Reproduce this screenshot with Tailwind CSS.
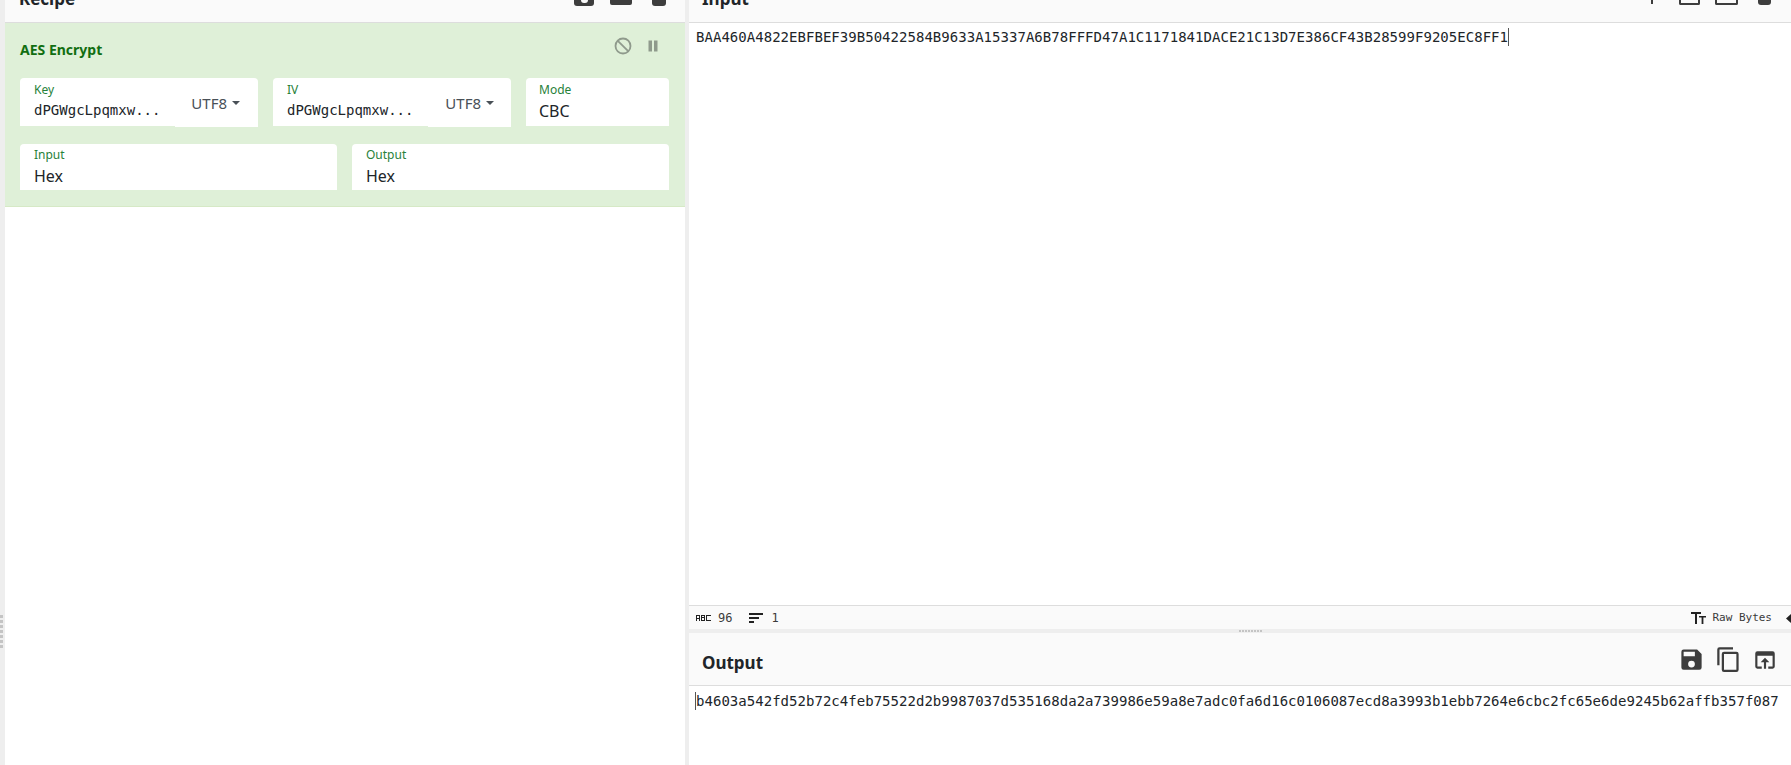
<!DOCTYPE html>
<html lang="en">
<head>
    <meta charset="UTF-8">
    <meta name="viewport" content="width=device-width, initial-scale=1.0">
    <title>CyberChef</title>
    <script src="https://cdn.jsdelivr.net/npm/@tailwindcss/browser@4"></script>
</head>
<body class="bg-[#eeeeee] h-[765px] w-[1791px] overflow-hidden flex font-['Noto_Sans','Open_Sans',sans-serif] text-[#212529]">

    <!-- left gutter -->
    <div class="w-[5px] shrink-0 relative">
        <div class="absolute left-0 top-[615px] flex flex-col gap-[2px]">
            <div class="w-[3px] h-[3px] bg-[#c4c4c4]"></div>
            <div class="w-[3px] h-[3px] bg-[#c4c4c4]"></div>
            <div class="w-[3px] h-[3px] bg-[#c4c4c4]"></div>
            <div class="w-[3px] h-[3px] bg-[#c4c4c4]"></div>
            <div class="w-[3px] h-[3px] bg-[#c4c4c4]"></div>
            <div class="w-[3px] h-[3px] bg-[#c4c4c4]"></div>
            <div class="w-[3px] h-[3px] bg-[#c4c4c4]"></div>
        </div>
    </div>

    <!-- recipe -->
    <div class="w-[680px] shrink-0 bg-white flex flex-col">
        <div class="h-[23px] shrink-0 bg-[#fafafa] border-b border-[#dddddd] flex items-start justify-between overflow-hidden pl-[14px] pr-[19px]">
            <span class="text-[17px] leading-[24px] font-bold mt-[-13px]">Recipe</span>
            <div class="flex items-start gap-[16px]">
                <div class="w-[20px] h-[6px] rounded-b-[3px] bg-[#3d3d3d] flex justify-center"><div class="w-[7px] h-[3px] rounded-b-full bg-[#fafafa]"></div></div>
                <div class="w-[22px] h-[5px] rounded-b-[2px] bg-[#3d3d3d]"></div>
                <div class="w-[14px] h-[6px] ml-[4px] rounded-b-[3px] bg-[#3d3d3d]"></div>
            </div>
        </div>
        <div class="h-[184px] shrink-0 bg-[#dff0d8] border-b border-[#d6e9c6] pl-[15px] pr-[16px] flex flex-col">
            <div class="h-[55px] shrink-0 flex justify-between pt-[13px]">
                <span class="text-[14px] leading-[27px] font-bold text-[#116e11]">AES Encrypt</span>
                <div class="flex gap-[10px] pr-[6px]">
                    <svg class="w-[20px] h-[20px]" viewBox="0 0 20 20" fill="none" stroke="#8f9a8c" stroke-width="1.8"><circle cx="10" cy="10" r="7.500"/><path d="M4.800 4.800l10.400 10.400"/></svg>
                    <svg class="w-[20px] h-[20px]" viewBox="0 0 20 20" fill="#8f9a8c"><path d="M5.500 4.500h3.500v11H5.500zM11 4.500h3.500v11H11z"/></svg>
                </div>
            </div>
            <div class="flex gap-[15px]">
                <div class="w-[238px] h-[48px] bg-white rounded-t-[4px] flex relative">
                    <div class="pl-[14px] flex-1">
                        <div class="text-[12px] leading-[16px] pt-[4px] text-[#28813a]">Key</div>
                        <div class="text-[14px] leading-[20px] pt-[2px] font-['DejaVu_Sans_Mono',monospace]">dPGWgcLpqmxw...</div>
                    </div>
                    <div class="absolute right-[18px] top-[15px] text-[15px] leading-[20px] text-[#495057] flex items-center gap-[5px]">UTF8<span class="w-0 h-0 border-x-[4px] border-x-transparent border-t-[4px] border-t-[#495057]"></span></div>
                    <div class="absolute right-0 bottom-[-1px] w-[83px] h-px bg-white"></div>
                </div>
                <div class="w-[238px] h-[48px] bg-white rounded-t-[4px] flex relative">
                    <div class="pl-[14px] flex-1">
                        <div class="text-[12px] leading-[16px] pt-[4px] text-[#28813a]">IV</div>
                        <div class="text-[14px] leading-[20px] pt-[2px] font-['DejaVu_Sans_Mono',monospace]">dPGWgcLpqmxw...</div>
                    </div>
                    <div class="absolute right-[17px] top-[15px] text-[15px] leading-[20px] text-[#495057] flex items-center gap-[5px]">UTF8<span class="w-0 h-0 border-x-[4px] border-x-transparent border-t-[4px] border-t-[#495057]"></span></div>
                    <div class="absolute right-0 bottom-[-1px] w-[83px] h-px bg-white"></div>
                </div>
                <div class="flex-1 h-[48px] bg-white rounded-t-[4px] pl-[13px]">
                    <div class="text-[12px] leading-[16px] pt-[4px] text-[#28813a]">Mode</div>
                    <div class="text-[16px] leading-[22px] pt-[2px]">CBC</div>
                </div>
            </div>
            <div class="flex gap-[15px] mt-[18px]">
                <div class="flex-1 h-[46px] bg-white rounded-t-[4px] pl-[14px]">
                    <div class="text-[12px] leading-[16px] pt-[3px] text-[#28813a]">Input</div>
                    <div class="text-[16px] leading-[22px] pt-[2px]">Hex</div>
                </div>
                <div class="flex-1 h-[46px] bg-white rounded-t-[4px] pl-[14px]">
                    <div class="text-[12px] leading-[16px] pt-[3px] text-[#28813a]">Output</div>
                    <div class="text-[16px] leading-[22px] pt-[2px]">Hex</div>
                </div>
            </div>
        </div>
    </div>

    <!-- vertical gutter -->
    <div class="w-[4px] shrink-0"></div>

    <!-- input and output -->
    <div class="flex-1 min-w-0 flex flex-col">
        <div class="h-[23px] shrink-0 bg-[#fafafa] border-b border-[#dddddd] flex items-start justify-between overflow-hidden pl-[13px] pr-[20px]">
            <span class="text-[17px] leading-[24px] font-bold mt-[-13px]">Input</span>
            <div class="flex items-start">
                <div class="w-[2px] h-[4px] bg-[#3d3d3d] mr-[26px]"></div>
                <div class="w-[21px] h-[5px] rounded-b-[2px] border-x-2 border-b-2 border-[#3d3d3d] mr-[15px]"></div>
                <div class="w-[23px] h-[5px] rounded-b-[2px] border-x-2 border-b-2 border-[#3d3d3d] mr-[20px]"></div>
                <div class="w-[13px] h-[5px] rounded-b-[3px] bg-[#3d3d3d]"></div>
            </div>
        </div>
        <div class="h-[582px] shrink-0 bg-white pl-[7px] pt-[4px] font-['DejaVu_Sans_Mono',monospace] text-[14px] leading-[20px] tracking-[0.03px] whitespace-pre">BAA460A4822EBFBEF39B50422584B9633A15337A6B78FFFD47A1C1171841DACE21C13D7E386CF43B28599F9205EC8FF1<span class="inline-block w-px h-[18px] bg-[#555555] align-[-4px]"></span></div>
        <div class="h-[24px] shrink-0 bg-[#fafafa] border-t border-[#dddddd] flex items-center justify-between text-[11px] font-['DejaVu_Sans_Mono',monospace] pt-[1px]">
            <div class="flex items-center pl-[7px]">
                <svg class="w-[15px] h-[6px]" viewBox="0 0 15 6" fill="#222222"><path d="M0 0h4v6H3V4H1v2H0zM1 1v2h2V1zM5 0h4v6H5zM6 1v1h2V1zM6 3v2h2V3zM10 0h5v1h-4v4h4v1h-5z"/></svg>
                <span class="ml-[7px] text-[12px] text-[#3b3b3b]">96</span>
                <svg class="w-[14px] h-[10px] ml-[17px]" viewBox="0 0 14 10" fill="#222222"><path d="M0 0h14v2H0zM0 4h10v2H0zM0 8h5v2H0z"/></svg>
                <span class="ml-[8px] text-[12px] text-[#3b3b3b]">1</span>
            </div>
            <div class="flex items-center overflow-hidden">
                <svg class="w-[15px] h-[12px]" viewBox="0 0 15 12" fill="#222222"><path d="M0 0h10v2H6v10H4V2H0zM8 4h7v1.600h-2.600V12h-1.800V5.600H8z"/></svg>
                <span class="ml-[6px] mr-[14px] text-[#3b3b3b]">Raw Bytes</span>
                <svg class="w-[5px] h-[9px]" viewBox="0 0 5 9" fill="#222222"><path d="M5 0v9L0 4.500z"/></svg>
            </div>
        </div>
        <div class="h-[4px] shrink-0 relative">
            <div class="absolute left-[550px] top-[1px] flex gap-[1px]">
                <div class="w-[2px] h-[2px] bg-[#c4c4c4]"></div><div class="w-[2px] h-[2px] bg-[#c4c4c4]"></div><div class="w-[2px] h-[2px] bg-[#c4c4c4]"></div><div class="w-[2px] h-[2px] bg-[#c4c4c4]"></div><div class="w-[2px] h-[2px] bg-[#c4c4c4]"></div><div class="w-[2px] h-[2px] bg-[#c4c4c4]"></div><div class="w-[2px] h-[2px] bg-[#c4c4c4]"></div><div class="w-[2px] h-[2px] bg-[#c4c4c4]"></div>
            </div>
        </div>
        <div class="h-[53px] shrink-0 bg-[#fafafa] border-b border-[#dddddd] flex items-center justify-between pl-[13px] pr-[13px]">
            <span class="text-[17px] font-bold pt-[7px]">Output</span>
            <div class="flex items-center gap-[10px] pt-[1px]">
                <svg class="w-[27px] h-[27px]" viewBox="0 0 24 24" fill="#3d3d3d"><path d="M17 3H5a2 2 0 0 0-2 2v14a2 2 0 0 0 2 2h14a2 2 0 0 0 2-2V7l-4-4zm-5 16a3 3 0 1 1 0-6 3 3 0 0 1 0 6zm3-10H5V5h10v4z"/></svg>
                <svg class="w-[27px] h-[27px]" viewBox="0 0 24 24" fill="#3d3d3d"><path d="M16 1H4a2 2 0 0 0-2 2v14h2V3h12V1zm3 4H8a2 2 0 0 0-2 2v14a2 2 0 0 0 2 2h11a2 2 0 0 0 2-2V7a2 2 0 0 0-2-2zm0 16H8V7h11v14z"/></svg>
                <svg class="w-[26px] h-[26px]" viewBox="0 0 24 24" fill="#3d3d3d"><path d="M19 4H5a2 2 0 0 0-2 2v12a2 2 0 0 0 2 2h4v-2H5V8h14v10h-4v2h4a2 2 0 0 0 2-2V6a2 2 0 0 0-2-2zm-7 6l-4 4h3v6h2v-6h3l-4-4z"/></svg>
            </div>
        </div>
        <div class="flex-1 bg-white pl-[6px] pt-[5px] font-['DejaVu_Sans_Mono',monospace] text-[14px] leading-[20px] tracking-[0.03px] whitespace-pre"><span class="inline-block w-px h-[18px] bg-[#555555] align-[-4px]"></span>b4603a542fd52b72c4feb75522d2b9987037d535168da2a739986e59a8e7adc0fa6d16c0106087ecd8a3993b1ebb7264e6cbc2fc65e6de9245b62affb357f087</div>
    </div>
</body>
</html>
